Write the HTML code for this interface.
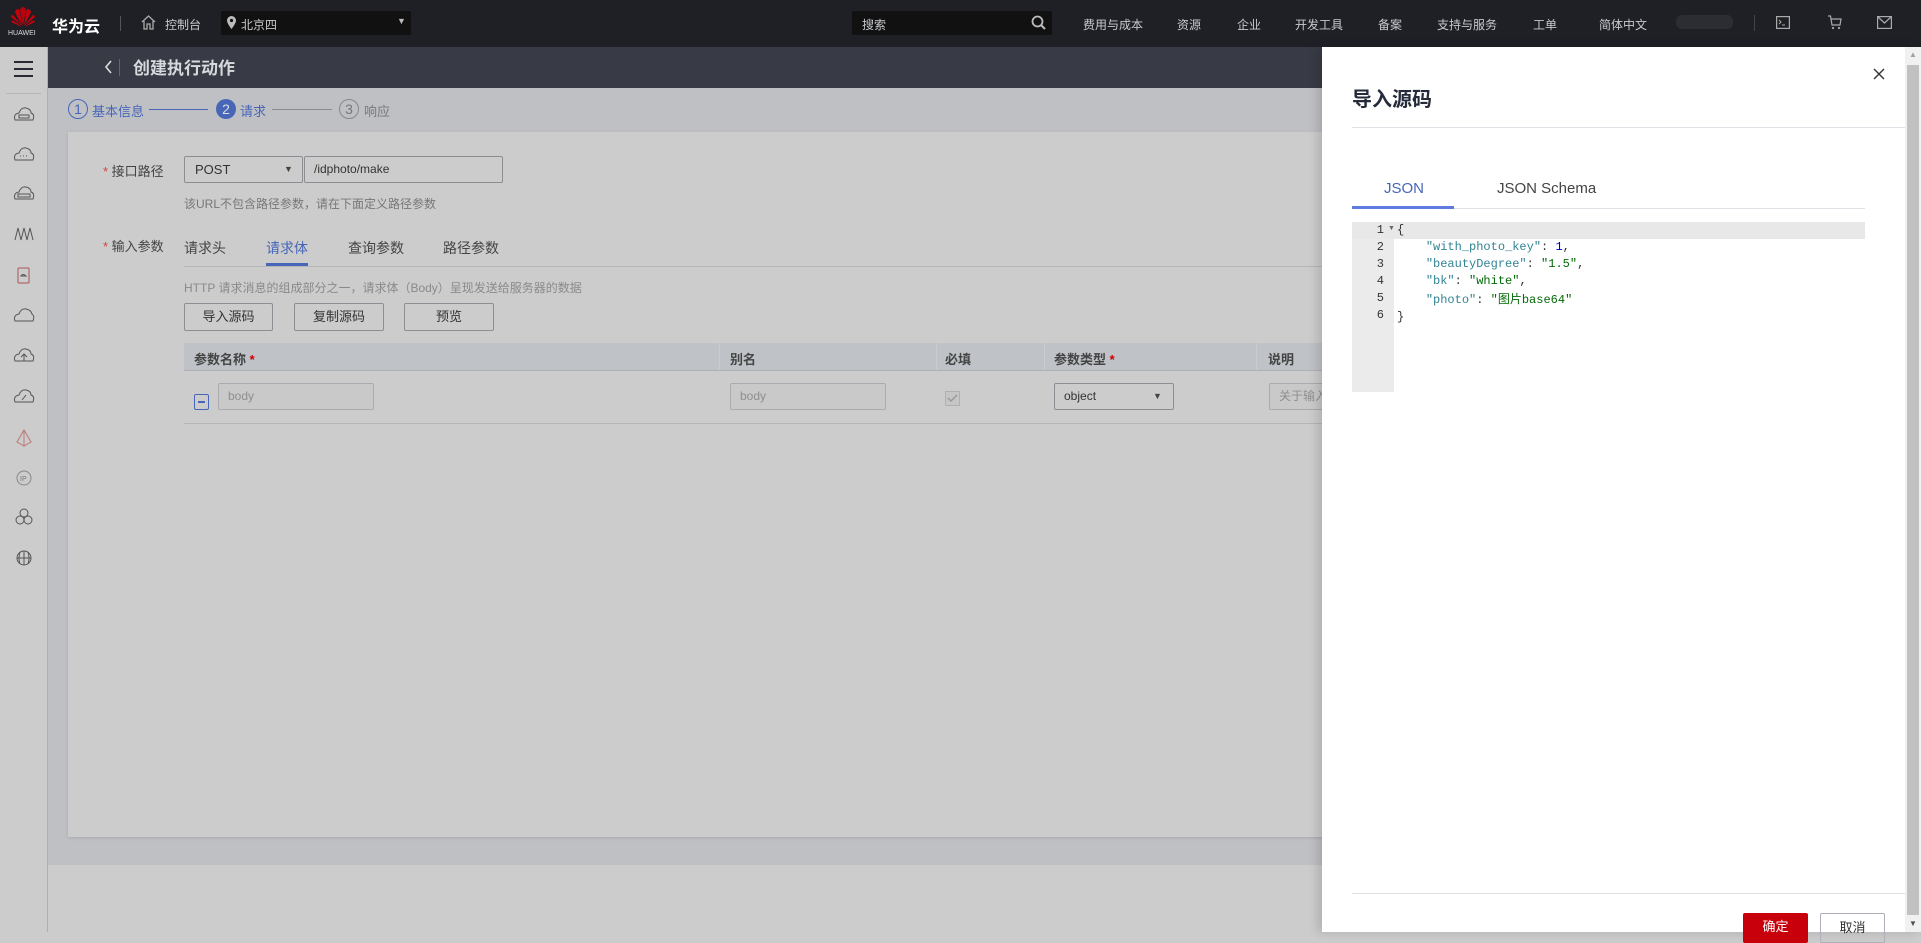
<!DOCTYPE html>
<html><head><meta charset="utf-8">
<style>
*{box-sizing:border-box;margin:0;padding:0}
body{width:1921px;height:932px;overflow:hidden;position:relative;background:#cccccc;font-family:"Liberation Sans","Noto Sans CJK SC",sans-serif;font-size:13px;color:#333}
.abs{position:absolute}
.top{left:0;top:0;width:1921px;height:47px;background:#1f2026;color:#c8c9cc}
.top span{position:absolute;top:16px;font-size:12px;color:#c8c9cc;white-space:nowrap}
.side{left:0;top:47px;width:48px;height:885px;background:#cccccc;border-right:1px solid #b0b0b0}
.hdr{left:48px;top:47px;width:1300px;height:41px;background:#383b45}
.gray{left:48px;top:88px;width:1300px;height:777px;background:#bfc0c4}
.card{left:68px;top:132px;width:1280px;height:705px;background:#cccccc;box-shadow:0 1px 3px rgba(0,0,0,.12)}
.txt{position:absolute;white-space:nowrap}
.btn{position:absolute;height:28px;border:1px solid #8c8e93;border-radius:2px;text-align:center;line-height:26px;font-size:13px;color:#333}
.inp{position:absolute;height:27px;border:1px solid #a9abb0;border-radius:2px;background:#c9c9c9;line-height:25px;padding-left:9px;color:#8e8e8e;font-size:12px}
.drawer{left:1322px;top:47px;width:599px;height:885px;background:#fff;box-shadow:-4px 0 10px rgba(0,0,0,.15)}
.code{font-family:"Liberation Mono",monospace;font-size:12px;position:absolute;white-space:pre;line-height:17px}
.k{color:#318495}.s{color:#036a07}.n{color:#0000cd}
.ln{position:absolute;width:32px;text-align:right;font-family:"Liberation Mono",monospace;font-size:12px;color:#333;line-height:17px}
</style></head><body>

<div class="abs top">
  <svg class="abs" style="left:10px;top:6px" width="26" height="22" viewBox="0 0 26 22">
    <g fill="#c7000b"><path d="M13 20 L10 4 Q11 1 13 1 Q15 1 16 4Z" opacity=".9"/><path d="M12 20 L5 6 Q6 3 8 3 Q10 4 10 7Z"/><path d="M14 20 L21 6 Q20 3 18 3 Q16 4 16 7Z"/><path d="M12 20 L1 11 Q1 9 3 9Z"/><path d="M14 20 L25 11 Q25 9 23 9Z"/><path d="M12 21 L1 16 Q2 14 4 15Z"/><path d="M14 21 L25 16 Q24 14 22 15Z"/></g>
  </svg>
  <div class="txt" style="left:8px;top:30px;font-size:7px;color:#ddd">HUAWEI</div>
  <div class="txt" style="left:52px;top:13px;font-size:16px;font-weight:bold;color:#fff">华为云</div>
  <div class="abs" style="left:120px;top:16px;width:1px;height:15px;background:#555"></div>
  <svg class="abs" style="left:140px;top:14px" width="17" height="17" viewBox="0 0 17 17"><path d="M2 8 L8.5 2 L15 8 M4 7 V15 H7 V10 H10 V15 H13 V7" fill="none" stroke="#aaa" stroke-width="1.3"/></svg>
  <span style="left:165px">控制台</span>
  <div class="abs" style="left:221px;top:11px;width:190px;height:24px;background:#111;border-radius:2px"></div>
  <svg class="abs" style="left:227px;top:16px" width="9" height="13" viewBox="0 0 9 13"><path d="M4.5 0 A4.5 4.5 0 0 1 9 4.5 C9 7.5 4.5 13 4.5 13 C4.5 13 0 7.5 0 4.5 A4.5 4.5 0 0 1 4.5 0Z" fill="#bbb"/><circle cx="4.5" cy="4.5" r="1.6" fill="#111"/></svg>
  <span style="left:241px;top:16px">北京四</span>
  <div class="txt" style="left:397px;top:16px;font-size:9px;color:#bbb">▼</div>
  <div class="abs" style="left:852px;top:11px;width:200px;height:24px;background:#111;border-radius:2px"></div>
  <span style="left:862px;top:16px;font-size:12px">搜索</span>
  <svg class="abs" style="left:1031px;top:15px" width="15" height="15" viewBox="0 0 15 15"><circle cx="6.5" cy="6.5" r="5" fill="none" stroke="#bbb" stroke-width="1.8"/><path d="M10 10 L14 14" stroke="#bbb" stroke-width="2"/></svg>
  <span style="left:1083px">费用与成本</span><span style="left:1177px">资源</span><span style="left:1237px">企业</span><span style="left:1295px">开发工具</span><span style="left:1378px">备案</span><span style="left:1437px">支持与服务</span><span style="left:1533px">工单</span><span style="left:1599px">简体中文</span>
  <div class="abs" style="left:1676px;top:15px;width:57px;height:14px;background:#2c2d33;border-radius:6px"></div>
  <div class="abs" style="left:1754px;top:15px;width:1px;height:16px;background:#444"></div>
  <svg class="abs" style="left:1776px;top:16px" width="14" height="13" viewBox="0 0 14 13"><rect x=".6" y=".6" width="12.8" height="11.8" fill="none" stroke="#aaa" stroke-width="1.2"/><path d="M3 4 L5 6 L3 8 M6 9 H9" stroke="#aaa" fill="none"/></svg>
  <svg class="abs" style="left:1827px;top:15px" width="16" height="15" viewBox="0 0 16 15"><path d="M1 1 H3.5 L5 10 H13 L14 4 H4" fill="none" stroke="#aaa" stroke-width="1.2"/><circle cx="6" cy="13" r="1.1" fill="#aaa"/><circle cx="12" cy="13" r="1.1" fill="#aaa"/></svg>
  <svg class="abs" style="left:1877px;top:16px" width="15" height="13" viewBox="0 0 15 13"><rect x=".6" y=".6" width="13.8" height="11.8" fill="none" stroke="#aaa" stroke-width="1.2"/><path d="M1 1 L7.5 7 L14 1" fill="none" stroke="#aaa" stroke-width="1.2"/></svg>
</div>

<div class="abs side">
  <div class="abs" style="left:14px;top:14px;width:19px;height:2px;background:#2a2a35"></div>
  <div class="abs" style="left:14px;top:21px;width:19px;height:2px;background:#2a2a35"></div>
  <div class="abs" style="left:14px;top:28px;width:19px;height:2px;background:#2a2a35"></div>
  <div class="abs" style="left:6px;top:46px;width:35px;height:1px;background:#b5b5b5"></div>
  <svg class="abs" style="left:12px;top:58px" width="24" height="470" viewBox="0 0 24 470" fill="none" stroke="#555" stroke-width="1">
    <path d="M3 15 Q1 9 7 8 Q9 2 14 3 Q19 4 19 8 Q23 9 21 15Z"/><rect x="7" y="10" width="10" height="3"/>
    <path d="M3 55 Q1 49 7 48 Q9 42 14 43 Q19 44 19 48 Q23 49 21 55Z"/><path d="M8 51h1M11 51h1M14 51h1"/>
    <path d="M3 94 Q1 88 7 87 Q9 81 14 82 Q19 83 19 87 Q23 88 21 94Z"/><rect x="6" y="89" width="12" height="3"/>
    <path d="M3 135 L6 123 L9 135 L12 123 L15 135 L18 123 L21 135"/>
    <rect x="6" y="163" width="11" height="15" rx="1" stroke="#a55"/><path d="M9 171 Q11 168 14 171Z"/>
    <path d="M3 216 Q1 210 7 209 Q9 203 14 204 Q19 205 20 209 Q23 211 21 216Z"/>
    <path d="M3 256 Q1 250 7 249 Q9 243 14 244 Q19 245 19 249 Q23 250 21 256Z"/><path d="M12 256 V249 M9 252 L12 249 L15 252"/>
    <path d="M3 297 Q1 291 7 290 Q9 284 14 285 Q19 286 19 290 Q23 291 21 297Z"/><path d="M10 295 L14 290"/>
    <path d="M12 325 L5 337 L12 341 L19 337Z M12 325 V341" stroke="#b77"/>
    <circle cx="12" cy="373" r="7" stroke="#888"/><text x="8" y="376" font-size="7" fill="#777" stroke="none">IP</text>
    <circle cx="12" cy="408" r="4"/><circle cx="8" cy="415" r="4"/><circle cx="16" cy="415" r="4"/>
    <circle cx="12" cy="453" r="7"/><path d="M5 453h14M12 446v14M8 447q-2 6 0 12M16 447q2 6 0 12"/>
  </svg>
</div>

<div class="abs hdr">
  <svg class="abs" style="left:56px;top:13px" width="9" height="14" viewBox="0 0 9 14"><path d="M7 1 L2 7 L7 13" fill="none" stroke="#ddd" stroke-width="1.6"/></svg>
  <div class="abs" style="left:71px;top:12px;width:1px;height:17px;background:#666"></div>
  <div class="txt" style="left:85px;top:7px;font-size:17px;font-weight:bold;color:#d8d9dc">创建执行动作</div>
</div>

<div class="abs gray"></div>
<div class="abs" style="left:68px;top:99px;width:20px;height:20px;border:1px solid #4766b8;border-radius:50%;text-align:center;line-height:18px;color:#4766b8;font-size:14px">1</div>
<div class="txt" style="left:92px;top:101px;color:#4766b8;font-size:13px">基本信息</div>
<div class="abs" style="left:149px;top:109px;width:59px;height:1px;background:#4766b8"></div>
<div class="abs" style="left:216px;top:99px;width:20px;height:20px;background:#4766b8;border-radius:50%;text-align:center;line-height:20px;color:#ddd;font-size:14px">2</div>
<div class="txt" style="left:240px;top:101px;color:#4766b8;font-size:13px">请求</div>
<div class="abs" style="left:272px;top:109px;width:60px;height:1px;background:#8a8a8a"></div>
<div class="abs" style="left:339px;top:99px;width:20px;height:20px;border:1px solid #888;border-radius:50%;text-align:center;line-height:18px;color:#777;font-size:14px">3</div>
<div class="txt" style="left:364px;top:101px;color:#777;font-size:13px">响应</div>

<div class="abs card"></div>
<div class="txt" style="left:103px;top:161px;font-size:13px;color:#444"><span style="color:#c44">*</span> 接口路径</div>
<div class="abs" style="left:184px;top:156px;width:119px;height:27px;border:1px solid #8c8e93;border-radius:2px"></div>
<div class="txt" style="left:195px;top:162px;color:#333">POST</div>
<div class="txt" style="left:284px;top:164px;font-size:9px;color:#444">▼</div>
<div class="abs" style="left:304px;top:156px;width:199px;height:27px;border:1px solid #8c8e93;border-radius:2px"></div>
<div class="txt" style="left:314px;top:162px;color:#333;font-size:12px">/idphoto/make</div>
<div class="txt" style="left:184px;top:195px;font-size:12px;color:#777">该URL不包含路径参数，请在下面定义路径参数</div>
<div class="txt" style="left:103px;top:236px;font-size:13px;color:#444"><span style="color:#c44">*</span> 输入参数</div>
<div class="txt" style="left:184px;top:238px;font-size:14px;color:#444">请求头</div>
<div class="txt" style="left:266px;top:238px;font-size:14px;color:#4766b8">请求体</div>
<div class="txt" style="left:348px;top:238px;font-size:14px;color:#444">查询参数</div>
<div class="txt" style="left:443px;top:238px;font-size:14px;color:#444">路径参数</div>
<div class="abs" style="left:184px;top:266px;width:1140px;height:1px;background:#b6b6b6"></div>
<div class="abs" style="left:266px;top:263px;width:42px;height:3px;background:#4766b8"></div>
<div class="txt" style="left:184px;top:279px;font-size:12px;color:#8a8a8a">HTTP 请求消息的组成部分之一，请求体（Body）呈现发送给服务器的数据</div>
<div class="btn" style="left:184px;top:303px;width:89px">导入源码</div>
<div class="btn" style="left:294px;top:303px;width:90px">复制源码</div>
<div class="btn" style="left:404px;top:303px;width:90px">预览</div>
<div class="abs" style="left:184px;top:343px;width:1140px;height:28px;background:#bfc2c7;border-bottom:1px solid #aeb0b4"></div>
<div class="abs" style="left:719px;top:343px;width:1px;height:27px;background:#ccc"></div>
<div class="abs" style="left:936px;top:343px;width:1px;height:27px;background:#ccc"></div>
<div class="abs" style="left:1044px;top:343px;width:1px;height:27px;background:#ccc"></div>
<div class="abs" style="left:1256px;top:343px;width:1px;height:27px;background:#ccc"></div>
<div class="txt" style="left:194px;top:349px;font-size:13px;color:#444;font-weight:bold">参数名称<span style="color:#c00"> *</span></div>
<div class="txt" style="left:730px;top:349px;font-size:13px;color:#444;font-weight:bold">别名</div>
<div class="txt" style="left:945px;top:349px;font-size:13px;color:#444;font-weight:bold">必填</div>
<div class="txt" style="left:1054px;top:349px;font-size:13px;color:#444;font-weight:bold">参数类型<span style="color:#c00"> *</span></div>
<div class="txt" style="left:1268px;top:349px;font-size:13px;color:#444;font-weight:bold">说明</div>
<div class="abs" style="left:194px;top:394px;width:15px;height:16px;border:1px solid #4766b8;border-radius:2px"></div>
<div class="abs" style="left:198px;top:401px;width:7px;height:2px;background:#4766b8"></div>
<div class="inp" style="left:218px;top:383px;width:156px">body</div>
<div class="inp" style="left:730px;top:383px;width:156px">body</div>
<div class="abs" style="left:945px;top:391px;width:15px;height:15px;border:1px solid #b0b0b0;background:#c6c6c6"></div>
<svg class="abs" style="left:947px;top:394px" width="11" height="9"><path d="M1 4 L4 7 L10 1" fill="none" stroke="#999" stroke-width="1.5"/></svg>
<div class="abs" style="left:1054px;top:383px;width:120px;height:27px;border:1px solid #8c8e93;border-radius:2px"></div>
<div class="txt" style="left:1064px;top:389px;color:#333;font-size:12px">object</div>
<div class="txt" style="left:1153px;top:391px;font-size:9px;color:#444">▼</div>
<div class="inp" style="left:1269px;top:383px;width:70px">关于输入</div>
<div class="abs" style="left:184px;top:423px;width:1140px;height:1px;background:#b6b6b6"></div>

<div class="abs drawer">
  <div class="txt" style="left:30px;top:36px;font-size:20px;font-weight:bold;color:#252b3a">导入源码</div>
  <svg class="abs" style="left:551px;top:21px" width="12" height="12" viewBox="0 0 12 12"><path d="M1 1 L11 11 M11 1 L1 11" stroke="#333" stroke-width="1.4"/></svg>
  <div class="abs" style="left:30px;top:80px;width:553px;height:1px;background:#dfe1e6"></div>
  <div class="txt" style="left:62px;top:133px;font-size:15px;color:#4766b8">JSON</div>
  <div class="txt" style="left:175px;top:133px;font-size:15px;color:#444">JSON Schema</div>
  <div class="abs" style="left:30px;top:161px;width:513px;height:1px;background:#dfe1e6"></div>
  <div class="abs" style="left:30px;top:159px;width:102px;height:3px;background:#5e7ce0"></div>
  <div class="abs" style="left:30px;top:175px;width:42px;height:170px;background:#ebebeb"></div>
  <div class="abs" style="left:30px;top:175px;width:513px;height:17px;background:#e8e8e8"></div>
  <div class="ln" style="left:30px;top:175px">1</div><div class="txt" style="left:66px;top:178px;font-size:7px;color:#666">▼</div>
  <div class="ln" style="left:30px;top:192px">2</div>
  <div class="ln" style="left:30px;top:209px">3</div>
  <div class="ln" style="left:30px;top:226px">4</div>
  <div class="ln" style="left:30px;top:243px">5</div>
  <div class="ln" style="left:30px;top:260px">6</div>
  <div class="code" style="left:75px;top:175px">{
    <span class="k">"with_photo_key"</span>: <span class="n">1</span>,
    <span class="k">"beautyDegree"</span>: <span class="s">"1.5"</span>,
    <span class="k">"bk"</span>: <span class="s">"white"</span>,
    <span class="k">"photo"</span>: <span class="s">"<span style="font-family:'Noto Sans CJK SC',sans-serif">图片</span>base64"</span>
}</div>
  <div class="abs" style="left:30px;top:846px;width:553px;height:1px;background:#dfe1e6"></div>
  <div class="abs" style="left:421px;top:866px;width:65px;height:30px;background:#c7000b;border-radius:2px;color:#fff;text-align:center;line-height:28px;font-size:13px">确定</div>
  <div class="abs" style="left:498px;top:866px;width:65px;height:30px;border:1px solid #adb0b8;border-radius:2px;color:#333;text-align:center;line-height:28px;font-size:13px">取消</div>
  <div class="abs" style="left:583px;top:0;width:16px;height:885px;background:#f1f1f1"></div>
  <div class="abs" style="left:585px;top:18px;width:12px;height:850px;background:#c1c1c1"></div>
  <div class="txt" style="left:587px;top:3px;font-size:8px;color:#a0a0a0">▲</div>
  <div class="txt" style="left:587px;top:872px;font-size:8px;color:#505050">▼</div>
</div>
</body></html>
